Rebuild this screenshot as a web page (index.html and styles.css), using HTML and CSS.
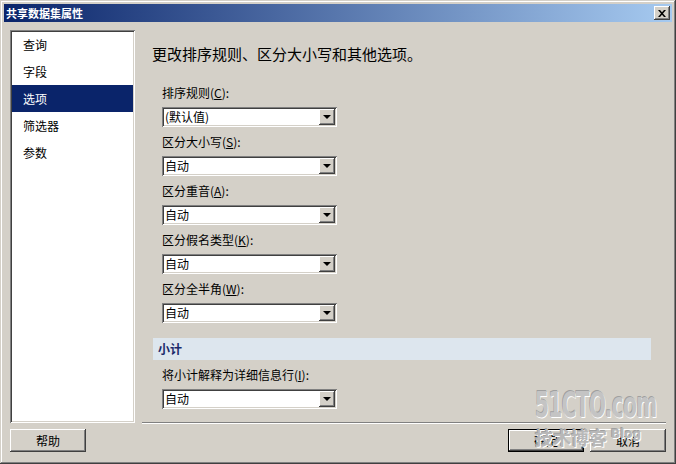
FILE: index.html
```html
<!DOCTYPE html>
<html lang="zh-CN">
<head>
    <meta charset="UTF-8">
    <title>共享数据集属性</title>
    <link rel="stylesheet" href="styles.css">
</head>
<body>
    <div class="window">
        <div class="titlebar">
            <span class="title">共享数据集属性</span>
            <span class="close">
                <svg width="8" height="7" viewBox="0 0 8 7"><path d="M0 0h2l2 2.2L6 0h2L5 3.5 8 7H6L4 4.8 2 7H0l3-3.5z" fill="#000"/></svg>
            </span>
        </div>

        <div class="main">
            <ul class="nav">
                <li>查询</li>
                <li>字段</li>
                <li class="active">选项</li>
                <li>筛选器</li>
                <li>参数</li>
            </ul>

            <div class="content">
                <h1>更改排序规则、区分大小写和其他选项。</h1>

                <div class="field">
                    <label>排序规则(<u>C</u>):</label>
                    <div class="combo"><span>(默认值)</span><i class="arrow"></i></div>
                </div>
                <div class="field">
                    <label>区分大小写(<u>S</u>):</label>
                    <div class="combo"><span>自动</span><i class="arrow"></i></div>
                </div>
                <div class="field">
                    <label>区分重音(<u>A</u>):</label>
                    <div class="combo"><span>自动</span><i class="arrow"></i></div>
                </div>
                <div class="field">
                    <label>区分假名类型(<u>K</u>):</label>
                    <div class="combo"><span>自动</span><i class="arrow"></i></div>
                </div>
                <div class="field">
                    <label>区分全半角(<u>W</u>):</label>
                    <div class="combo"><span>自动</span><i class="arrow"></i></div>
                </div>

                <div class="band">小计</div>

                <div class="field">
                    <label>将小计解释为详细信息行(<u>I</u>):</label>
                    <div class="combo"><span>自动</span><i class="arrow"></i></div>
                </div>
            </div>
        </div>

        <div class="footer">
            <button class="help">帮助</button>
            <div class="spacer"></div>
            <button class="ok">确定</button>
            <button>取消</button>
        </div>

        <div class="watermark">
            <div class="wm-big">51CTO.com</div>
            <div class="wm-small">技术博客<sup>Blog</sup></div>
        </div>
    </div>
</body>
</html>
```

FILE: styles.css
```css
* {
    box-sizing: border-box;
}
body {
    margin: 0;
    background-color: #d4d0c8;
    font-family: "Noto Sans CJK SC", "Liberation Sans", sans-serif;
    font-size: 12px;
    color: #000;
}
.window {
    position: relative;
    width: 676px;
    height: 464px;
    padding: 4px;
    display: flex;
    flex-direction: column;
    background: #d4d0c8;
    box-shadow: inset -1px -1px 0 #404040, inset 1px 1px 0 #d4d0c8,
                inset -2px -2px 0 #808080, inset 2px 2px 0 #fff;
}
.titlebar {
    height: 18px;
    display: flex;
    align-items: center;
    justify-content: space-between;
    padding: 0 2px 0 2px;
    background: linear-gradient(to right, #0a246a, #a6caf0);
}
.title {
    color: #fff;
    font-weight: bold;
    font-size: 11px;
    line-height: 18px;
}
.close {
    width: 16px;
    height: 14px;
    display: flex;
    align-items: center;
    justify-content: center;
    background: #d4d0c8;
    box-shadow: inset -1px -1px 0 #404040, inset 1px 1px 0 #fff,
                inset -2px -2px 0 #808080;
}
.main {
    display: flex;
    padding: 8px 6px 0 6px;
    height: 401px;
}
.nav {
    list-style: none;
    margin: 0;
    padding: 1px 2px;
    width: 125px;
    height: 393px;
    background: #fff;
    box-shadow: inset 1px 1px 0 #808080, inset -1px -1px 0 #fff,
                inset 2px 2px 0 #404040, inset -2px -2px 0 #d4d0c8;
}
.nav li {
    height: 27px;
    line-height: 27px;
    padding-left: 11px;
}
.nav li.active {
    background: #0a246a;
    color: #fff;
}
.content {
    flex: 1;
    margin-left: 7px;
    padding: 15px 15px 0 0;
    border-bottom: 1px solid #808080;
    box-shadow: 0 1px 0 #fff;
    height: 393px;
}
.content h1 {
    margin: 0 0 22px 10px;
    font-size: 15px;
    font-weight: normal;
    line-height: 18px;
}
.field {
    padding-left: 20px;
    margin-bottom: 7px;
}
.field label {
    display: block;
    line-height: 16px;
    margin-bottom: 6px;
}
.combo {
    width: 175px;
    height: 20px;
    background: #fff;
    display: flex;
    align-items: center;
    justify-content: space-between;
    padding: 2px 2px 2px 3px;
    box-shadow: inset 1px 1px 0 #808080, inset -1px -1px 0 #fff,
                inset 2px 2px 0 #404040, inset -2px -2px 0 #d4d0c8;
}
.combo span {
    line-height: 16px;
}
.arrow {
    width: 16px;
    height: 16px;
    position: relative;
    background: #d4d0c8;
    box-shadow: inset -1px -1px 0 #404040, inset 1px 1px 0 #fff,
                inset -2px -2px 0 #808080;
}
.arrow::after {
    content: "";
    position: absolute;
    left: 4px;
    top: 6px;
    border-left: 4px solid transparent;
    border-right: 4px solid transparent;
    border-top: 4px solid #000;
}
.band {
    margin: 15px 0 7px 11px;
    height: 22px;
    line-height: 22px;
    padding-left: 5px;
    background: #dde6ee;
    color: #1a2a6a;
    font-weight: bold;
}
.footer {
    display: flex;
    padding: 6px 6px 0 6px;
}
.spacer {
    flex: 1;
}
button {
    width: 76px;
    height: 23px;
    margin: 0;
    padding: 0;
    border: none;
    background: #d4d0c8;
    font-family: inherit;
    font-size: 12px;
    color: #000;
    box-shadow: inset -1px -1px 0 #404040, inset 1px 1px 0 #fff,
                inset -2px -2px 0 #808080;
}
button.ok {
    width: 76px;
    margin-right: 6px;
    box-shadow: inset 0 0 0 1px #000, inset -2px -2px 0 #404040,
                inset 2px 2px 0 #fff, inset -3px -3px 0 #808080;
}
.watermark {
    position: absolute;
    left: 535px;
    top: 386px;
    width: 128px;
    white-space: nowrap;
    color: #c4c4c4;
    font-family: "DejaVu Sans Condensed", "DejaVu Sans", sans-serif;
    font-weight: bold;
    text-shadow: 1px 1px 0 #fff, -1px -1px 0 #a0a0a0;
    pointer-events: none;
}
.wm-big {
    font-size: 36px;
    line-height: 38px;
    letter-spacing: -1px;
    transform: scaleX(0.62);
    transform-origin: left;
}
.wm-small {
    font-family: "Noto Sans CJK SC", sans-serif;
    font-size: 18px;
    line-height: 20px;
    color: #b8b8b8;
}
.wm-small sup {
    font-family: "DejaVu Sans", sans-serif;
    font-size: 12px;
    margin-left: 4px;
}
```
